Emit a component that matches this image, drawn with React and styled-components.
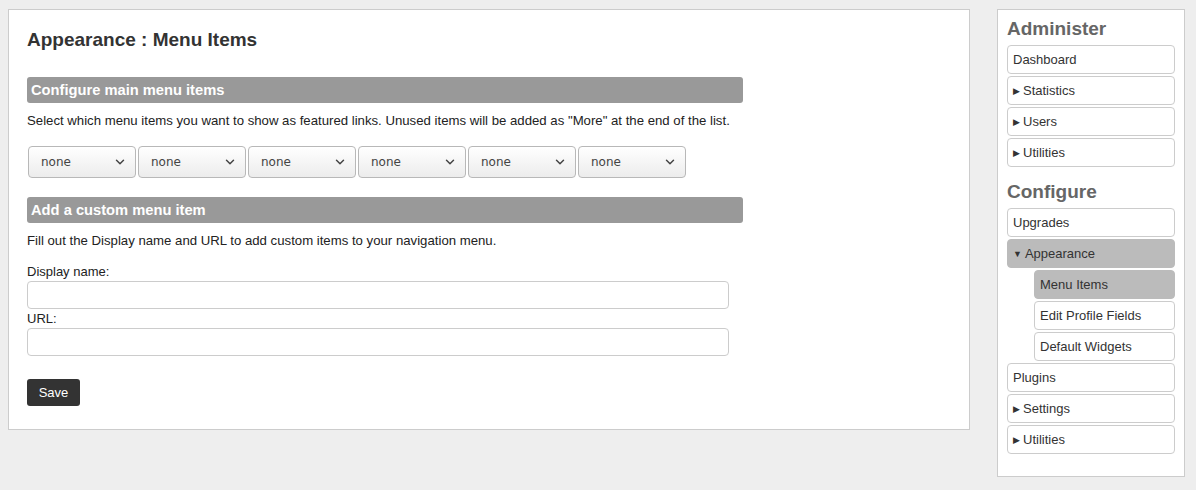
import React from "react";
import styled, { createGlobalStyle } from "styled-components";
import { ChevronDown } from "lucide-react";

const GlobalStyle = createGlobalStyle`
  body {
    margin: 0;
    background: #eeeeee;
    font-family: "Liberation Sans", Arial, sans-serif;
    color: #333;
  }
`;

const Page = styled.div`
  display: flex;
  align-items: flex-start;
  gap: 27px;
  padding: 9px 12px 0 8px;
`;

const Main = styled.main`
  flex: 0 0 962px;
  box-sizing: border-box;
  background: #fff;
  border: 1px solid #cccccc;
  padding: 18px 18px 23px 18px;
`;

const Title = styled.h1`
  margin: 0 0 25px;
  font-size: 19px;
  line-height: 24px;
  font-weight: bold;
  color: #333;
`;

const Section = styled.section`
  width: 716px;
  & + & {
    margin-top: 19px;
  }
`;

const SectionBar = styled.h2`
  margin: 0;
  height: 26px;
  line-height: 27px;
  padding-left: 4px;
  background: #999999;
  border-radius: 3px;
  color: #fff;
  font-size: 14.7px;
  font-weight: bold;
`;

const Help = styled.p`
  margin: 9px 0 0;
  font-size: 13.2px;
  line-height: 17px;
  color: #222;
`;

const SelectRow = styled.div`
  display: flex;
  gap: 2px;
  margin: 17px 0 0 1px;
`;

const SelectWrap = styled.div`
  position: relative;
  width: 108px;
  height: 32px;
  svg {
    position: absolute;
    right: 9px;
    top: 9px;
    pointer-events: none;
    color: #444;
  }
`;

const Select = styled.select`
  appearance: none;
  box-sizing: border-box;
  width: 100%;
  height: 100%;
  padding: 0 0 0 12px;
  border: 1px solid #b8b8b8;
  border-radius: 4px;
  background: linear-gradient(#ffffff, #ececec);
  font-family: "DejaVu Sans", sans-serif;
  font-size: 12px;
  color: #444;
`;

const Field = styled.div`
  display: flex;
  flex-direction: column;
  margin-top: ${(p) => p.$top}px;
`;

const Label = styled.label`
  font-size: 13px;
  line-height: 16px;
  color: #222;
`;

const TextInput = styled.input`
  box-sizing: border-box;
  width: 702px;
  height: 28px;
  margin-top: 1px;
  border: 1px solid #cccccc;
  border-radius: 4px;
  background: #fff;
`;

const SaveButton = styled.button`
  margin-top: 23px;
  width: 53px;
  height: 27px;
  border: none;
  border-radius: 3px;
  background: #333333;
  color: #fff;
  font-family: "Liberation Sans", Arial, sans-serif;
  font-size: 13px;
  cursor: pointer;
`;

const Sidebar = styled.aside`
  flex: 0 0 188px;
  box-sizing: border-box;
  background: #fff;
  border: 1px solid #cccccc;
  padding: 7px 9px 22px 9px;
`;

const SideHeading = styled.h3`
  margin: ${(p) => (p.$first ? "0" : "13px")} 0 4px;
  font-size: 19px;
  line-height: 24px;
  font-weight: bold;
  color: #666;
`;

const NavList = styled.ul`
  list-style: none;
  margin: 0;
  padding: 0;
  display: flex;
  flex-direction: column;
  gap: 2px;
`;

const NavItem = styled.li`
  box-sizing: border-box;
  height: 29px;
  margin-left: ${(p) => (p.$sub ? "27px" : "0")};
  padding-left: 5px;
  display: flex;
  align-items: center;
  gap: 3px;
  border: 1px solid ${(p) => (p.$active ? "#bbbbbb" : "#cccccc")};
  border-radius: 4px;
  background: ${(p) => (p.$active ? "#bbbbbb" : "#fff")};
  font-size: 13px;
  color: #333;
`;

const Arrow = styled.span`
  font-size: 9px;
  color: #333;
`;

const administer = [
  { label: "Dashboard" },
  { label: "Statistics", arrow: "▶" },
  { label: "Users", arrow: "▶" },
  { label: "Utilities", arrow: "▶" },
];

const configure = [
  { label: "Upgrades" },
  { label: "Appearance", arrow: "▼", active: true },
  { label: "Menu Items", sub: true, active: true },
  { label: "Edit Profile Fields", sub: true },
  { label: "Default Widgets", sub: true },
  { label: "Plugins" },
  { label: "Settings", arrow: "▶" },
  { label: "Utilities", arrow: "▶" },
];

const renderItems = (items) =>
  items.map((item, index) => (
    <NavItem key={index} $sub={item.sub} $active={item.active}>
      {item.arrow ? <Arrow>{item.arrow}</Arrow> : null}
      {item.label}
    </NavItem>
  ));

const App = () => {
  return (
    <>
      <GlobalStyle />
      <Page>
        <Main>
          <Title>Appearance : Menu Items</Title>

          {/* featured menu items */}
          <Section>
            <SectionBar>Configure main menu items</SectionBar>
            <Help>
              Select which menu items you want to show as featured links. Unused items will be added as "More" at the
              end of the list.
            </Help>
            <SelectRow>
              {[0, 1, 2, 3, 4, 5].map((i) => (
                <SelectWrap key={i}>
                  <Select defaultValue="none">
                    <option value="none">none</option>
                  </Select>
                  <ChevronDown size={14} strokeWidth={2.5} />
                </SelectWrap>
              ))}
            </SelectRow>
          </Section>

          {/* custom item */}
          <Section>
            <SectionBar>Add a custom menu item</SectionBar>
            <Help>Fill out the Display name and URL to add custom items to your navigation menu.</Help>
            <Field $top={15}>
              <Label>Display name:</Label>
              <TextInput type="text" />
            </Field>
            <Field $top={2}>
              <Label>URL:</Label>
              <TextInput type="text" />
            </Field>
            <SaveButton type="button">Save</SaveButton>
          </Section>
        </Main>

        <Sidebar>
          <SideHeading $first>Administer</SideHeading>
          <NavList>{renderItems(administer)}</NavList>
          <SideHeading>Configure</SideHeading>
          <NavList>{renderItems(configure)}</NavList>
        </Sidebar>
      </Page>
    </>
  );
};

export default App;
